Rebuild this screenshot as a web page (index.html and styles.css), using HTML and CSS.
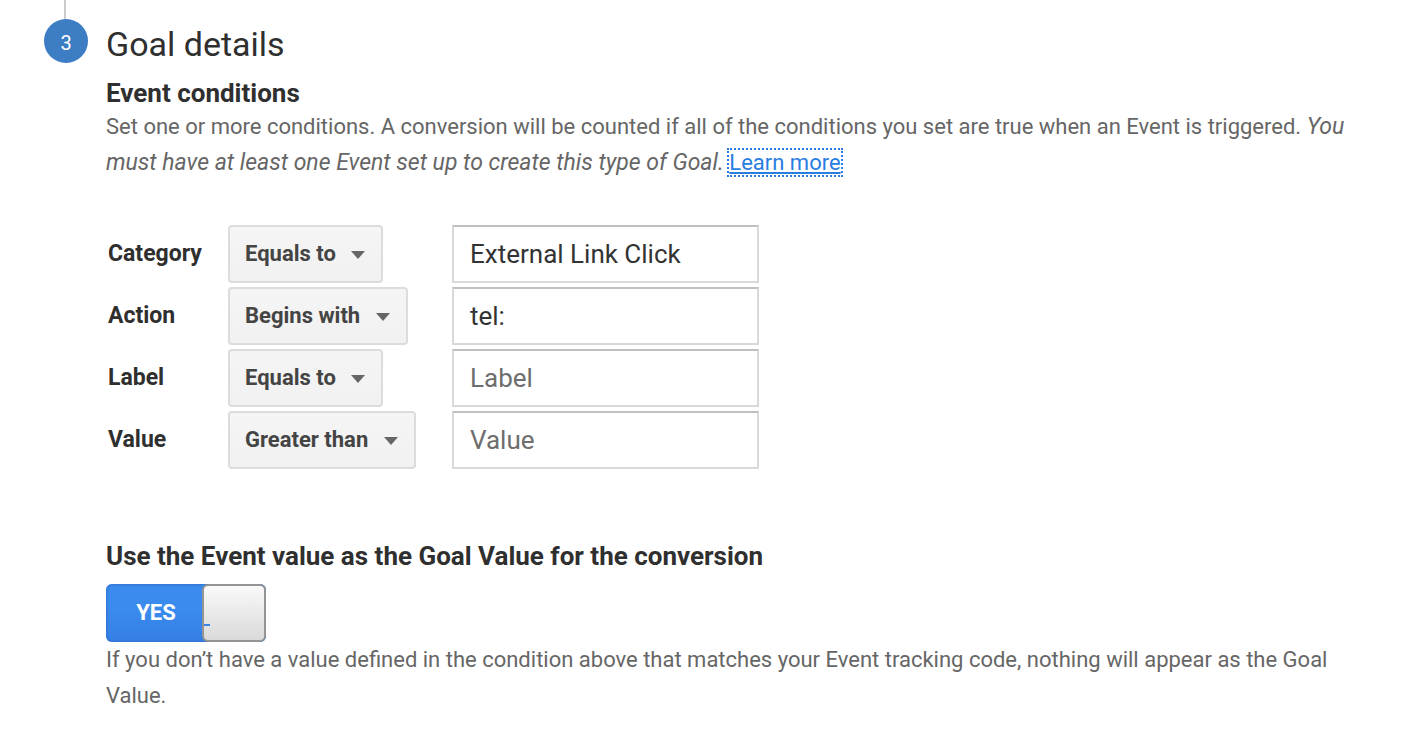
FILE: index.html
```html
<!DOCTYPE html>
<html lang="en">
<head>
<meta charset="utf-8">
<title>Goal details</title>
<link rel="stylesheet" href="styles.css">
</head>
<body>
<main class="step">
  <div class="rail">
    <span class="rail-line"></span>
    <span class="step-number">3</span>
  </div>
  <form class="content">
    <h1 class="title">Goal details</h1>
    <h2 class="heading">Event conditions</h2>
    <p class="help">Set one or more conditions. A conversion will be counted if all of the conditions you set are true when an Event is triggered. <em class="note">You must have at least one Event set up to create this type of Goal.</em> <a class="learn" href="#">Learn more</a></p>
    <div class="conditions">
      <div class="row">
        <label class="name" for="category">Category</label>
        <div class="match"><select class="select" aria-label="Category match"><option>Equals to</option></select></div>
        <input class="field" id="category" type="text" value="External Link Click">
      </div>
      <div class="row">
        <label class="name" for="action">Action</label>
        <div class="match"><select class="select" aria-label="Action match"><option>Begins with</option></select></div>
        <input class="field" id="action" type="text" value="tel:">
      </div>
      <div class="row">
        <label class="name" for="label">Label</label>
        <div class="match"><select class="select" aria-label="Label match"><option>Equals to</option></select></div>
        <input class="field" id="label" type="text" placeholder="Label">
      </div>
      <div class="row">
        <label class="name" for="value">Value</label>
        <div class="match"><select class="select" aria-label="Value match"><option>Greater than</option></select></div>
        <input class="field" id="value" type="text" placeholder="Value">
      </div>
    </div>
    <h2 class="heading" id="use-value">Use the Event value as the Goal Value for the conversion</h2>
    <button class="toggle" type="button" role="switch" aria-checked="true" aria-labelledby="use-value">
      <span class="toggle-text">YES</span>
      <span class="toggle-knob"><span class="knob-mark"></span></span>
    </button>
    <p class="help">If you don’t have a value defined in the condition above that matches your Event tracking code, nothing will appear as the Goal Value.</p>
  </form>
</main>
</body>
</html>
```
FILE: styles.css
```css
* { box-sizing: border-box; }
body {
  margin: 0;
  background: #fff;
  color: #2f2f2f;
  font-family: Roboto, "Liberation Sans", sans-serif;
}
.step {
  display: flex;
  gap: 18px;
  padding: 0 48px 0 44px;
}
.rail {
  flex: none;
  width: 44px;
  display: flex;
  flex-direction: column;
  align-items: center;
}
.rail-line {
  width: 2px;
  height: 19px;
  margin-right: 2px;
  background: #ccc;
}
.step-number {
  width: 44px;
  height: 44px;
  border-radius: 50%;
  background: #3d7dc4;
  color: #fff;
  font-size: 20px;
  line-height: 48px;
  text-align: center;
}
.content { flex: 1; min-width: 0; }
.title {
  margin: 0;
  padding-top: 20px;
  font-size: 34px;
  line-height: 48px;
  font-weight: 400;
}
.heading {
  margin: 0;
  padding-top: 9px;
  font-size: 26px;
  line-height: 32px;
  font-weight: 700;
}
.help {
  margin: 0;
  color: #666;
  font-size: 22px;
  line-height: 36px;
}
.note {
  font-size: 23px;
  line-height: 1;
}
.learn {
  color: #2a7de1;
  outline: 2px dotted #2a7de1;
}
.conditions {
  display: flex;
  flex-direction: column;
  gap: 4px;
  padding: 44px 0 62px;
}
.row { display: flex; align-items: center; }
.name {
  width: 122px;
  padding: 0 0 2px 2px;
  font-size: 23px;
  font-weight: 700;
}
.match { width: 224px; }
.select {
  appearance: none;
  display: block;
  height: 58px;
  padding: 0 45px 2px 15px;
  border: 2px solid #dcdcdc;
  border-radius: 4px;
  background: url("data:image/svg+xml,%3Csvg xmlns='http://www.w3.org/2000/svg' width='14' height='8'%3E%3Cpath d='M0 0h14L7 8z' fill='%23666'/%3E%3C/svg%3E") no-repeat right 16px top 24px, linear-gradient(#f5f5f5, #f1f1f1);
  color: #444;
  font: 700 22px Roboto, "Liberation Sans", sans-serif;
}
.field {
  width: 307px;
  height: 58px;
  padding: 0 16px;
  border: 2px solid #d9d9d9;
  border-top-color: #c0c0c0;
  background: #fff;
  color: #333;
  font: 400 26px Roboto, "Liberation Sans", sans-serif;
}
.field::placeholder { color: #6e6e6e; }
.toggle {
  display: flex;
  width: 160px;
  height: 58px;
  margin-top: 12px;
  padding: 0;
  border: 0;
  border-radius: 6px;
  background: linear-gradient(#3b8bee 40%, #357fe6);
  box-shadow: inset 0 0 3px 1px #2f73d0;
  color: #fff;
  font: 700 22px Roboto, "Liberation Sans", sans-serif;
}
.toggle-text {
  flex: 1;
  padding-left: 4px;
  line-height: 58px;
}
.toggle-knob {
  display: flex;
  align-items: flex-end;
  width: 64px;
  height: 58px;
  padding-bottom: 14px;
  border: 2px solid #949494;
  border-radius: 6px;
  background: linear-gradient(#f9f9f9, #e6e6e6 60%, #dadada);
}
.knob-mark {
  width: 6px;
  height: 2px;
  background: #3b82e8;
}
```
